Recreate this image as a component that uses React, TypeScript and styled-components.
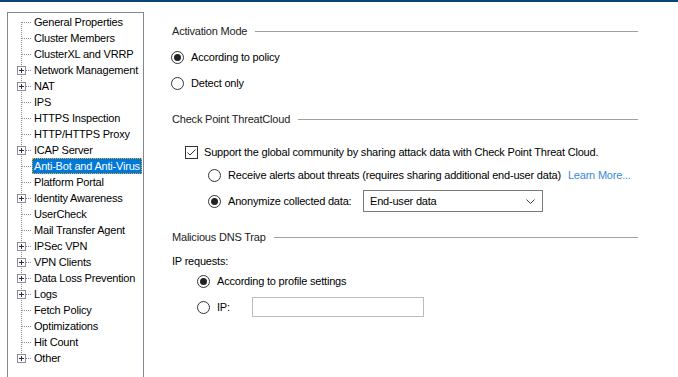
import React from "react";
import styled, { createGlobalStyle } from "styled-components";

const GlobalStyle = createGlobalStyle`
  html, body {
    margin: 0;
    padding: 0;
    background: #ffffff;
  }
  body {
    font-family: "Liberation Sans", Arial, sans-serif;
    font-size: 11px;
    color: #000000;
  }
`;

const Page = styled.div`
  width: 678px;
  height: 377px;
  overflow: hidden;
  display: flex;
  flex-direction: column;
`;

const TopBar = styled.div`
  height: 2px;
  background: #0b4278;
  flex-shrink: 0;
`;

const Body = styled.div`
  display: flex;
  align-items: flex-start;
`;

const TreePanel = styled.div`
  box-sizing: border-box;
  width: 137px;
  height: 380px;
  margin: 10px 0 0 7px;
  padding-top: 1px;
  border: 1px solid #828790;
  border-bottom: none;
  display: flex;
  flex-direction: column;
`;

const TreeRow = styled.div`
  display: flex;
  align-items: center;
  height: 16px;
`;

const TreeLabel = styled.span<{ $selected?: boolean }>`
  box-sizing: border-box;
  height: 16px;
  line-height: 14px;
  padding: 0 1px;
  white-space: nowrap;
  letter-spacing: -0.2px;
  border: 1px solid transparent;
  ${(p) =>
    p.$selected &&
    `
    background: #0078d7;
    color: #ffffff;
    border: 1px dotted #f5a623;
  `}
`;

const Content = styled.div`
  width: 466px;
  margin-left: 28px;
  padding-top: 21px;
  display: flex;
  flex-direction: column;
`;

const SectionHeader = styled.div<{ $mt: number }>`
  display: flex;
  align-items: center;
  height: 16px;
  margin-top: ${(p) => p.$mt}px;
  color: #222;
  letter-spacing: -0.2px;
`;

const Rule = styled.div`
  flex: 1;
  height: 1px;
  background: #a0a0a0;
  margin-left: 8px;
`;

const OptionRow = styled.div<{ $mt: number; $indent: number; $h?: number }>`
  display: flex;
  align-items: center;
  height: ${(p) => p.$h ?? 16}px;
  margin-top: ${(p) => p.$mt}px;
  margin-left: ${(p) => p.$indent}px;
  white-space: nowrap;
  letter-spacing: -0.2px;
`;

const RadioCircle = styled.span<{ $checked?: boolean }>`
  box-sizing: border-box;
  width: 13px;
  height: 13px;
  border-radius: 50%;
  border: 1px solid #333333;
  background: #ffffff;
  display: flex;
  align-items: center;
  justify-content: center;
  flex-shrink: 0;
  margin-right: 7px;
  &::after {
    content: "";
    width: 7px;
    height: 7px;
    border-radius: 50%;
    background: ${(p) => (p.$checked ? "#222222" : "transparent")};
  }
`;

const CheckBox = styled.span`
  box-sizing: border-box;
  width: 13px;
  height: 13px;
  border: 1px solid #333333;
  display: flex;
  align-items: center;
  justify-content: center;
  margin-right: 6px;
  flex-shrink: 0;
`;

const OptionText = styled.span<{ $width?: number }>`
  display: inline-block;
  ${(p) => (p.$width ? `width: ${p.$width}px;` : "")}
`;

const LinkText = styled.span`
  color: #3b87d9;
  margin-left: 7px;
`;

const SelectBox = styled.div`
  box-sizing: border-box;
  width: 180px;
  height: 22px;
  border: 1px solid #7a7a7a;
  display: flex;
  align-items: center;
  justify-content: space-between;
  padding: 0 7px 0 6px;
`;

const TextInput = styled.div`
  box-sizing: border-box;
  width: 172px;
  height: 20px;
  border: 1px solid #bcbcbc;
`;

const PlainLabel = styled.div<{ $mt: number }>`
  height: 16px;
  line-height: 16px;
  margin-top: ${(p) => p.$mt}px;
  letter-spacing: -0.2px;
`;

type TreeItem = { label: string; expandable?: boolean; selected?: boolean };

const treeItems: TreeItem[] = [
  { label: "General Properties" },
  { label: "Cluster Members" },
  { label: "ClusterXL and VRRP" },
  { label: "Network Management", expandable: true },
  { label: "NAT", expandable: true },
  { label: "IPS" },
  { label: "HTTPS Inspection" },
  { label: "HTTP/HTTPS Proxy" },
  { label: "ICAP Server", expandable: true },
  { label: "Anti-Bot and Anti-Virus", selected: true },
  { label: "Platform Portal" },
  { label: "Identity Awareness", expandable: true },
  { label: "UserCheck" },
  { label: "Mail Transfer Agent" },
  { label: "IPSec VPN", expandable: true },
  { label: "VPN Clients", expandable: true },
  { label: "Data Loss Prevention", expandable: true },
  { label: "Logs", expandable: true },
  { label: "Fetch Policy" },
  { label: "Optimizations" },
  { label: "Hit Count" },
  { label: "Other", expandable: true },
];

const Connector = ({ first, last, expandable }: { first: boolean; last: boolean; expandable?: boolean }) => (
  <svg width="24" height="16" viewBox="0 0 24 16" style={{ flexShrink: 0 }}>
    <line
      x1="13.5"
      y1={first ? 8 : 0}
      x2="13.5"
      y2={last ? 8 : 16}
      stroke="#8a8a8a"
      strokeDasharray="1 1"
    />
    <line x1="14" y1="8.5" x2="24" y2="8.5" stroke="#8a8a8a" strokeDasharray="1 1" />
    {expandable && (
      <g>
        <rect x="9.5" y="4.5" width="8" height="8" fill="#ffffff" stroke="#8f8f8f" />
        <line x1="11" y1="8.5" x2="16" y2="8.5" stroke="#1f2f4f" />
        <line x1="13.5" y1="6" x2="13.5" y2="11" stroke="#1f2f4f" />
      </g>
    )}
  </svg>
);

const Radio = ({ checked }: { checked?: boolean }) => <RadioCircle $checked={checked} />;

const Check = () => (
  <CheckBox>
    <svg width="11" height="11" viewBox="0 0 11 11">
      <polyline points="1.5,5.5 4,8 9.5,2.5" fill="none" stroke="#333333" strokeWidth="1" />
    </svg>
  </CheckBox>
);

const Chevron = () => (
  <svg width="9" height="5" viewBox="0 0 9 5">
    <polyline points="0.5,0.5 4.5,4.5 8.5,0.5" fill="none" stroke="#444444" strokeWidth="1" />
  </svg>
);

export default function App() {
  return (
    <>
      <GlobalStyle />
      <Page>
        <TopBar />
        <Body>
          <TreePanel>
            {treeItems.map((item, i) => (
              <TreeRow key={item.label}>
                <Connector first={i === 0} last={i === treeItems.length - 1} expandable={item.expandable} />
                <TreeLabel $selected={item.selected}>{item.label}</TreeLabel>
              </TreeRow>
            ))}
          </TreePanel>
          <Content>
            <SectionHeader $mt={0}>
              Activation Mode
              <Rule />
            </SectionHeader>
            <OptionRow $mt={10} $indent={-1}>
              <Radio checked />
              <OptionText>According to policy</OptionText>
            </OptionRow>
            <OptionRow $mt={10} $indent={-1}>
              <Radio />
              <OptionText>Detect only</OptionText>
            </OptionRow>

            <SectionHeader $mt={20}>
              Check Point ThreatCloud
              <Rule />
            </SectionHeader>
            <OptionRow $mt={17} $indent={13}>
              <Check />
              <OptionText>Support the global community by sharing attack data with Check Point Threat Cloud.</OptionText>
            </OptionRow>
            <OptionRow $mt={7} $indent={36}>
              <Radio />
              <OptionText>Receive alerts about threats (requires sharing additional end-user data)</OptionText>
              <LinkText>Learn More...</LinkText>
            </OptionRow>
            <OptionRow $mt={7} $indent={36} $h={22}>
              <Radio checked />
              <OptionText $width={135}>Anonymize collected data:</OptionText>
              <SelectBox>
                <span>End-user data</span>
                <Chevron />
              </SelectBox>
            </OptionRow>

            <SectionHeader $mt={17}>
              Malicious DNS Trap
              <Rule />
            </SectionHeader>
            <PlainLabel $mt={8}>IP requests:</PlainLabel>
            <OptionRow $mt={4} $indent={25}>
              <Radio checked />
              <OptionText>According to profile settings</OptionText>
            </OptionRow>
            <OptionRow $mt={8} $indent={25} $h={20}>
              <Radio />
              <OptionText $width={35}>IP:</OptionText>
              <TextInput />
            </OptionRow>
          </Content>
        </Body>
      </Page>
    </>
  );
}
